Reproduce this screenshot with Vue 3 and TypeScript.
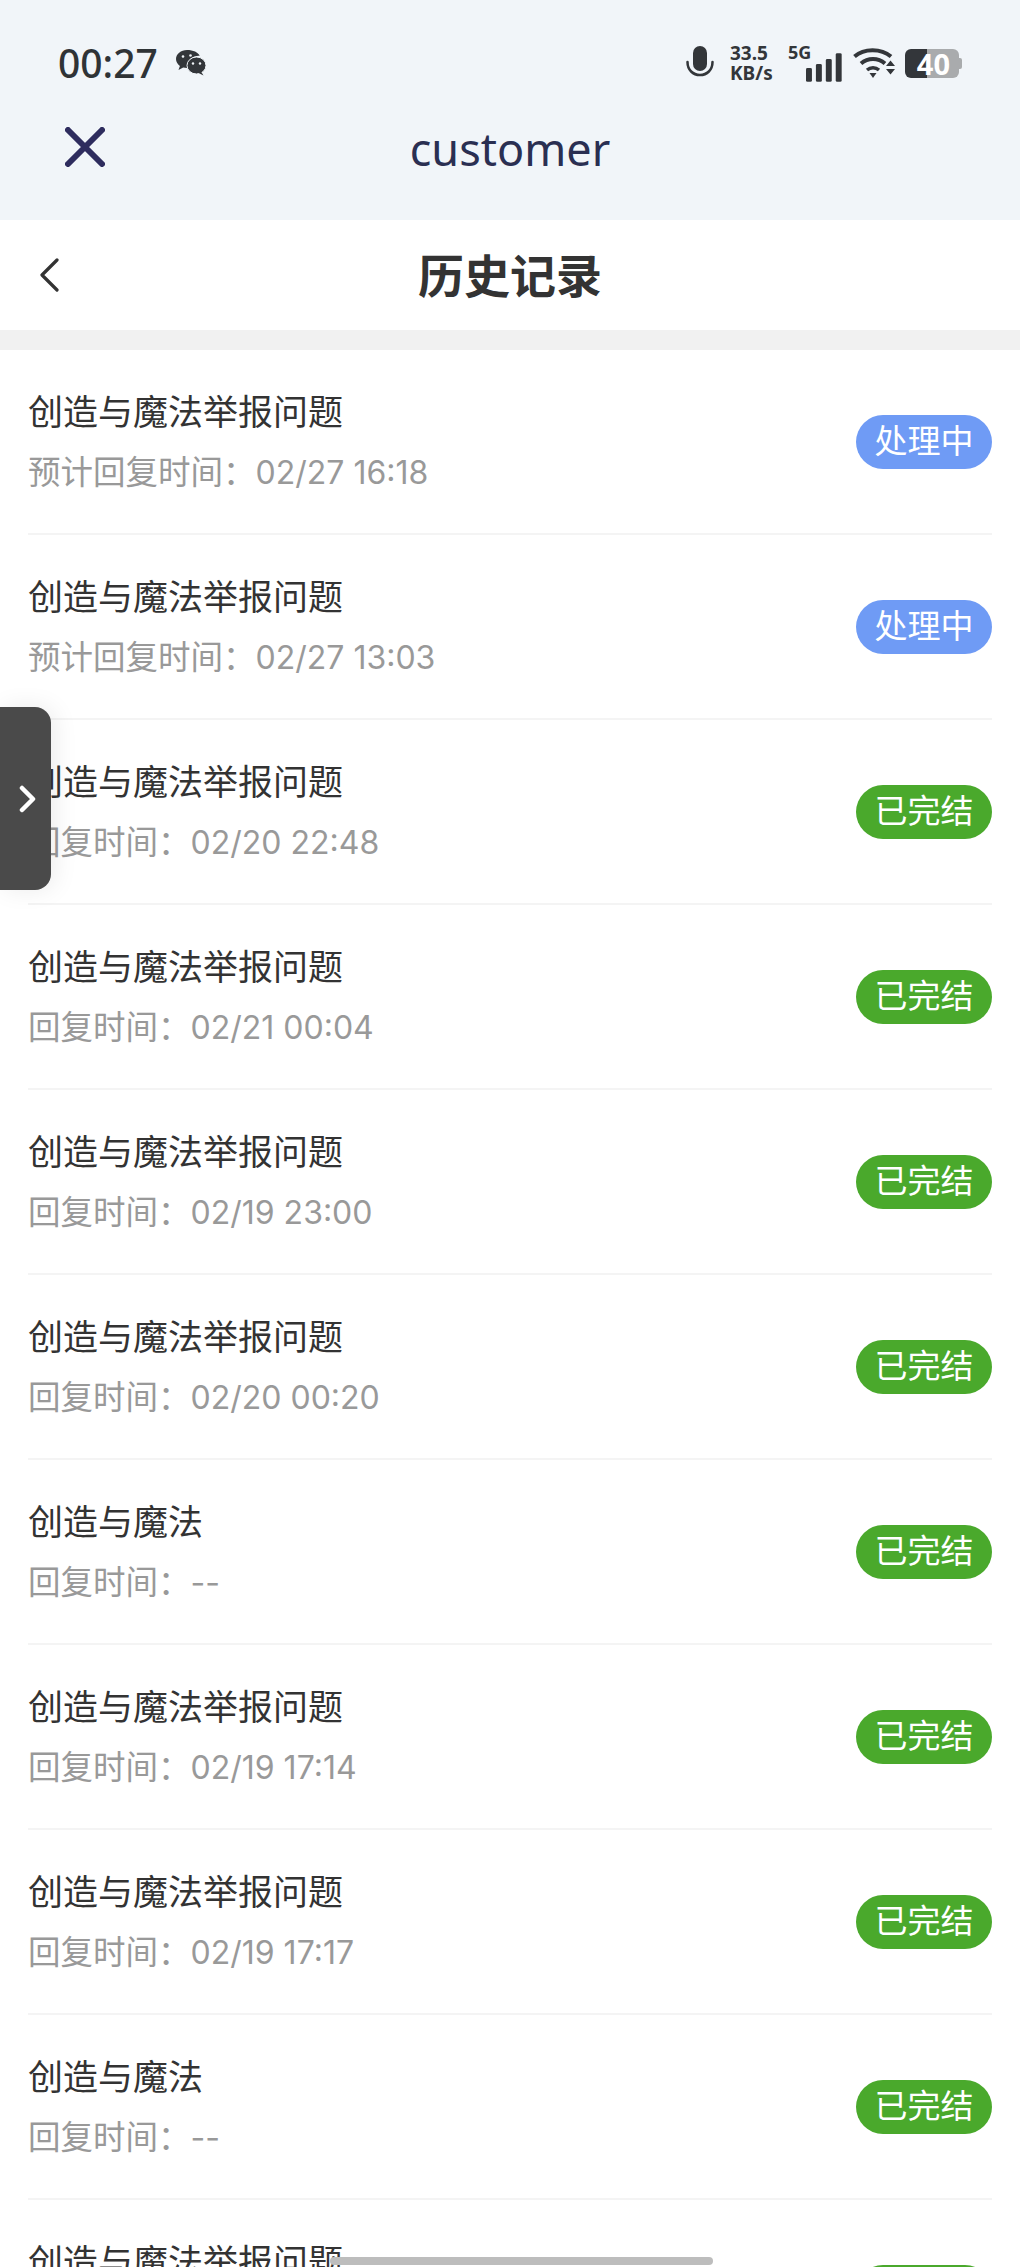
<template>
  <div class="page">
    <header class="top">
      <div class="status">
        <div class="status-left">
          <span class="clock">00:27</span>
          <svg class="wechat" viewBox="0 0 32 28">
            <path d="M12 1C5.900 1 1 5 1 10c0 2.800 1.500 5.200 3.900 6.900L3.500 21l4.700-2.500c1.200.3 2.500.5 3.800.5.500 0 1 0 1.500-.1-.3-1-.5-1.900-.5-2.900 0-5.200 4.800-9.200 10.700-9.200h1C23.300 3.400 18.100 1 12 1z" fill="#33363a"/>
            <ellipse cx="21.500" cy="16.500" rx="9.500" ry="8.500" fill="#33363a" stroke="#f1f5f9" stroke-width="1"/>
            <path d="M26 22.500l2.500 4-5-2.500z" fill="#33363a"/>
            <circle cx="8" cy="7.500" r="1.300" fill="#f1f5f9"/>
            <circle cx="15.500" cy="6.500" r="1.300" fill="#f1f5f9"/>
            <circle cx="18" cy="14.500" r="1.200" fill="#f1f5f9"/>
            <circle cx="25" cy="14.500" r="1.200" fill="#f1f5f9"/>
          </svg>
        </div>
        <div class="status-right">
          <svg class="mic" viewBox="0 0 28 34">
            <rect x="7" y="0" width="14" height="25" rx="7" fill="#33363a"/>
            <path d="M1.500 16c0 8 5.500 13 12.500 13s12.500-5 12.500-13" fill="none" stroke="#33363a" stroke-width="2.500" stroke-linecap="round"/>
          </svg>
          <div class="speed"><span>33.5</span><span>KB/s</span></div>
          <div class="signal">
            <span class="net">5G</span>
            <svg class="bars" viewBox="0 0 36 29">
              <rect x="0" y="15" width="6" height="14" rx="1.500" fill="#33363a"/>
              <rect x="10" y="11" width="6" height="18" rx="1.500" fill="#33363a"/>
              <rect x="20" y="6" width="6" height="23" rx="1.500" fill="#33363a"/>
              <rect x="30" y="0" width="6" height="29" rx="1.500" fill="#33363a"/>
            </svg>
          </div>
          <svg class="wifi" viewBox="0 0 42 32">
            <path d="M1.500 9.500C11 1 28 1 38 9.500" fill="none" stroke="#33363a" stroke-width="4"/>
            <path d="M8 16.500c7-6 17-6 24 0" fill="none" stroke="#33363a" stroke-width="4"/>
            <path d="M14 23c3.500-3 8.500-3 12 0" fill="none" stroke="#33363a" stroke-width="3.500"/>
            <path d="M16.500 26h7l-3.500 5z" fill="#33363a"/>
            <path d="M33 19l4.500-5.500 4.500 5.500zM33 22l4.500 5.500 4.500-5.500z" fill="#33363a"/>
          </svg>
          <div class="battery"><div class="cell">40</div><span class="cap"></span></div>
        </div>
      </div>
      <div class="appbar">
        <svg class="close" viewBox="0 0 40 40">
          <path d="M3 3l34 34M37 3L3 37" fill="none" stroke="#2e2c5e" stroke-width="6" stroke-linecap="round"/>
        </svg>
        <span class="app-name">customer</span>
      </div>
    </header>

    <div class="nav">
      <svg class="back" viewBox="0 0 20 34">
        <path d="M18 2L3 17l15 15" fill="none" stroke="#333" stroke-width="3.200" stroke-linecap="round" stroke-linejoin="round"/>
      </svg>
      <h1 class="nav-title">历史记录</h1>
    </div>
    <div class="gap"></div>

    <ul class="list">
      <li v-for="(r, i) in records" :key="i" class="row">
        <div class="info">
          <div class="name">{{ r.name }}</div>
          <div class="time">{{ r.label }}：<span class="num">{{ r.time }}</span></div>
        </div>
        <span class="badge" :class="r.pending ? 'blue' : 'green'">{{ r.pending ? '处理中' : '已完结' }}</span>
      </li>
    </ul>

    <div class="side-tab">
      <svg viewBox="0 0 18 28" class="side-arrow">
        <path d="M3 3l11 11L3 25" fill="none" stroke="#fff" stroke-width="4.500" stroke-linecap="round" stroke-linejoin="round"/>
      </svg>
    </div>
    <div class="home-bar"></div>
  </div>
</template>

<script setup lang="ts">
interface HistoryRecord {
  name: string
  label: string
  time: string
  pending?: boolean
}

const full = '创造与魔法举报问题'
const short = '创造与魔法'
const done = '回复时间'

const records: HistoryRecord[] = [
  { name: full, label: '预计回复时间', time: '02/27 16:18', pending: true },
  { name: full, label: '预计回复时间', time: '02/27 13:03', pending: true },
  { name: full, label: done, time: '02/20 22:48' },
  { name: full, label: done, time: '02/21 00:04' },
  { name: full, label: done, time: '02/19 23:00' },
  { name: full, label: done, time: '02/20 00:20' },
  { name: short, label: done, time: '--' },
  { name: full, label: done, time: '02/19 17:14' },
  { name: full, label: done, time: '02/19 17:17' },
  { name: short, label: done, time: '--' },
  { name: full, label: done, time: '02/19 17:17' }
]
</script>

<style>
html,
body {
  margin: 0;
  background: #fff;
}
</style>

<style scoped>
.page {
  position: relative;
  width: 1020px;
  height: 2267px;
  overflow: hidden;
  background: #fff;
  font-family: "Noto Sans", "Noto Sans CJK SC", sans-serif;
}

.top {
  height: 220px;
  background: #f1f5f9;
  box-sizing: border-box;
  padding-top: 42px;
}

.status {
  display: flex;
  justify-content: space-between;
  align-items: center;
  height: 42px;
  padding: 0 58px;
}

.status-left {
  display: flex;
  align-items: center;
  gap: 17px;
}

.clock {
  font-size: 39px;
  font-weight: 500;
  color: #2f3336;
  line-height: 42px;
}

.wechat {
  width: 32px;
  height: 28px;
}

.status-right {
  display: flex;
  align-items: center;
  height: 42px;
}

.mic {
  width: 28px;
  height: 34px;
  margin-right: 16px;
}

.speed {
  display: flex;
  flex-direction: column;
  width: 46px;
  font-size: 19px;
  line-height: 20px;
  font-weight: 700;
  color: #33363a;
  margin-right: 12px;
}

.signal {
  display: flex;
  align-items: flex-start;
  height: 38px;
  width: 54px;
  margin-right: 11px;
}

.net {
  font-size: 18px;
  line-height: 20px;
  font-weight: 700;
  color: #33363a;
  margin-right: -5px;
  margin-top: -2px;
}

.bars {
  width: 36px;
  height: 29px;
  margin-top: 9px;
}

.wifi {
  width: 42px;
  height: 32px;
  margin-right: 10px;
}

.battery {
  display: flex;
  align-items: center;
}

.cell {
  width: 54px;
  height: 29px;
  border-radius: 6px;
  background: linear-gradient(to right, #33363a 40%, #a9abad 40%);
  color: #fff;
  font-size: 29px;
  font-weight: 700;
  line-height: 29px;
  text-align: right;
  padding-right: 9px;
  box-sizing: border-box;
}

.cap {
  width: 3px;
  height: 11px;
  background: #a9abad;
  border-radius: 0 2px 2px 0;
}

.appbar {
  position: relative;
  display: flex;
  justify-content: center;
  align-items: center;
  height: 66px;
  margin-top: 32px;
}

.close {
  position: absolute;
  left: 65px;
  top: 11px;
  width: 40px;
  height: 40px;
}

.app-name {
  font-size: 45px;
  color: #2a2f52;
  line-height: 66px;
}

.nav {
  position: relative;
  display: flex;
  justify-content: center;
  align-items: center;
  height: 110px;
  background: #fff;
}

.back {
  position: absolute;
  left: 39px;
  top: 38px;
  width: 20px;
  height: 34px;
}

.nav-title {
  margin: 0;
  font-size: 46px;
  font-weight: 700;
  color: #333;
  line-height: 60px;
}

.gap {
  height: 20px;
  background: #f1f1f1;
}

.list {
  list-style: none;
  margin: 0;
  padding: 0 28px;
}

.row {
  display: flex;
  justify-content: space-between;
  align-items: center;
  height: 185px;
  box-sizing: border-box;
  border-bottom: 2px solid #f4f4f4;
}

.info {
  display: flex;
  flex-direction: column;
  gap: 16px;
  margin-top: 0;
}

.name {
  font-size: 35px;
  line-height: 46px;
  color: #333;
}

.time {
  font-size: 32.5px;
  line-height: 42px;
  color: #999;
}

.num {
  font-family: Inter, "Noto Sans", sans-serif;
  font-size: 32px;
}

.badge {
  display: flex;
  align-items: center;
  justify-content: center;
  width: 136px;
  height: 54px;
  border-radius: 27px;
  color: #fff;
  font-size: 33px;
  line-height: 50px;
  padding-bottom: 1px;
  box-sizing: border-box;
}

.blue {
  background: #6f9bf5;
}

.green {
  background: #4aa92c;
}

.side-tab {
  position: absolute;
  left: 0;
  top: 707px;
  display: flex;
  align-items: center;
  justify-content: center;
  width: 51px;
  height: 183px;
  padding-left: 4px;
  box-sizing: border-box;
  background: #4a4a4a;
  border-radius: 0 16px 16px 0;
  box-shadow: 4px 0 24px rgba(0, 0, 0, 0.08);
}

.side-arrow {
  width: 18px;
  height: 28px;
}

.home-bar {
  position: absolute;
  left: 330px;
  top: 2257px;
  width: 383px;
  height: 8px;
  border-radius: 4px;
  background: #bdbdbd;
}
</style>
